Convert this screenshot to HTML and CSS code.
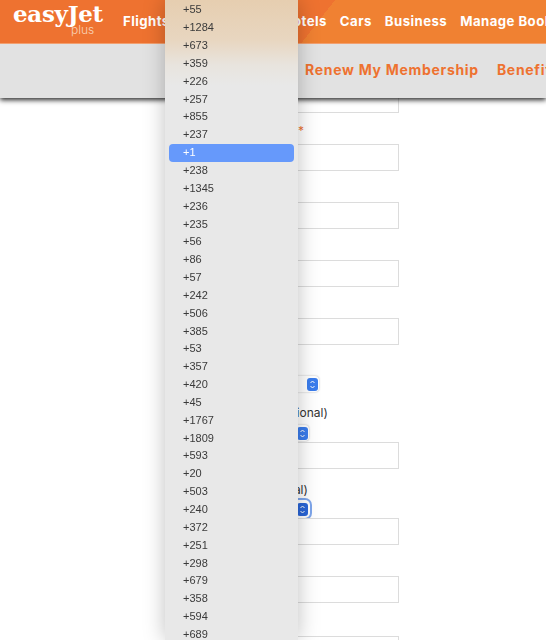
FILE: index.html
```html
<!DOCTYPE html>
<html lang="en">
<head>
  <meta charset="UTF-8">
  <meta name="viewport" content="width=device-width, initial-scale=1.0">
  <title>easyJet plus</title>
  <link rel="stylesheet" href="styles.css">
</head>
<body>
<div class="top-bar">
  <header class="main-header">
    <div class="logo">
      <span class="logo-name">easyJet</span>
      <span class="logo-plus">plus</span>
    </div>
    <nav class="main-nav">
      <a>Flights</a>
      <a class="nav-hotels">Hotels</a>
      <a>Cars</a>
      <a>Business</a>
      <a>Manage Bookings</a>
    </nav>
  </header>
  <nav class="sub-nav">
    <a>Renew My Membership</a>
    <a>Benefits</a>
  </nav>
</div>

<form class="form">
  <div class="field"><label></label><div class="input"></div></div>
  <div class="field"><label class="label-star"><span class="req">*</span></label><div class="input"></div></div>
  <div class="field"><label></label><div class="input"></div></div>
  <div class="field"><label></label><div class="input"></div></div>
  <div class="field"><label></label><div class="input"></div></div>
  <div class="field field-select">
    <label></label>
    <div class="select select-wide"><span class="stepper"><svg viewBox="0 0 11 13"><path d="M3.5 5 5.5 3 7.5 5M3.5 8 5.5 10 7.5 8"/></svg></span></div>
  </div>
  <div class="field field-select field-phone">
    <label>Alternative Phone (optional)</label>
    <div class="select"><span class="stepper"><svg viewBox="0 0 11 13"><path d="M3.5 5 5.5 3 7.5 5M3.5 8 5.5 10 7.5 8"/></svg></span></div>
    <div class="input"></div>
  </div>
  <div class="field field-select field-phone field-focus">
    <label>Mobile Phone (optional)</label>
    <div class="select select-focus"><span class="stepper"><svg viewBox="0 0 11 13"><path d="M3.5 5 5.5 3 7.5 5M3.5 8 5.5 10 7.5 8"/></svg></span></div>
    <div class="input"></div>
  </div>
  <div class="field field-gap"><label></label><div class="input"></div></div>
  <div class="field"><label></label><div class="input"></div></div>
</form>

<ul class="dropdown">
  <li>+55</li>
  <li>+1284</li>
  <li>+673</li>
  <li>+359</li>
  <li>+226</li>
  <li>+257</li>
  <li>+855</li>
  <li>+237</li>
  <li class="selected">+1</li>
  <li>+238</li>
  <li>+1345</li>
  <li>+236</li>
  <li>+235</li>
  <li>+56</li>
  <li>+86</li>
  <li>+57</li>
  <li>+242</li>
  <li>+506</li>
  <li>+385</li>
  <li>+53</li>
  <li>+357</li>
  <li>+420</li>
  <li>+45</li>
  <li>+1767</li>
  <li>+1809</li>
  <li>+593</li>
  <li>+20</li>
  <li>+503</li>
  <li>+240</li>
  <li>+372</li>
  <li>+251</li>
  <li>+298</li>
  <li>+679</li>
  <li>+358</li>
  <li>+594</li>
  <li>+689</li>
</ul>
</body>
</html>
```

FILE: styles.css
```css
html, body {
  height: 640px;
  overflow: hidden;
}

body {
  margin: 0;
  background-color: #fff;
  color: #333;
  font-family: Inter, "Liberation Sans", sans-serif;
}

.top-bar {
  position: fixed;
  top: 0;
  left: 0;
  right: 0;
  z-index: 2;
  box-shadow: 0 2px 5px rgba(0,0,0,0.85);
}

.main-header {
  display: flex;
  height: 43px;
  padding-left: 13px;
  background: linear-gradient(128deg, #ee7230 264px, #f08132 264px);
  border-bottom: 1px solid #f2a070;
  overflow: hidden;
}

.logo {
  display: flex;
  flex-direction: column;
  width: 110px;
  flex-shrink: 0;
  color: #fff;
}

.logo-name {
  margin-top: 1px;
  font-family: "DejaVu Serif", serif;
  font-size: 23px;
  font-weight: 700;
  line-height: 25px;
  letter-spacing: -0.3px;
}

.logo-plus {
  margin-top: -3px;
  margin-left: 58px;
  font-size: 12px;
  font-weight: 300;
  line-height: 13px;
  color: #f8d3b8;
}

.main-nav {
  display: flex;
  align-items: center;
  gap: 13px;
  padding-bottom: 2px;
  white-space: nowrap;
  color: #fff;
  font-size: 13.2px;
  font-weight: 700;
  letter-spacing: 0.45px;
}

.nav-hotels {
  margin-left: 100px;
}

.sub-nav {
  box-sizing: border-box;
  display: flex;
  align-items: center;
  gap: 18px;
  height: 54px;
  padding-left: 305px;
  padding-bottom: 4px;
  background-color: #e2e2e2;
  color: #ee7230;
  font-size: 14px;
  font-weight: 700;
  letter-spacing: 0.7px;
  white-space: nowrap;
  overflow: hidden;
}

.form {
  width: 229px;
  margin-left: 170px;
  padding-top: 65px;
}

.field {
  margin-bottom: 10px;
}

.field label {
  display: block;
  height: 16px;
  margin-bottom: 5px;
  font-size: 12px;
  line-height: 16px;
  white-space: nowrap;
}

.field .label-star {
  padding-left: 128px;
}

.req {
  color: #ee7230;
}

.input {
  box-sizing: border-box;
  height: 27px;
  background-color: #fff;
  border: 1px solid #dcdcdc;
}

.field-select {
  margin-bottom: 13px;
}

.field-gap {
  margin-bottom: 12px;
}

.field-phone label {
  margin-bottom: 4px;
}

.field-phone .select {
  margin-bottom: 1px;
}

.field-focus {
  margin-bottom: 10px;
}

.field-focus label {
  margin-bottom: 3px;
  padding-left: 3px;
}

.select {
  box-sizing: border-box;
  display: flex;
  justify-content: flex-end;
  align-items: center;
  width: 139px;
  height: 16px;
  padding-right: 1px;
  background-color: #fff;
  border-radius: 4px;
  box-shadow: 0 0 2px rgba(0,0,0,0.3);
}

.select-wide {
  width: 149px;
}

.select-focus {
  box-shadow: 0 0 0 1px #fff, 0 0 0 3px #7ea6ec;
}

.stepper {
  display: block;
  width: 11px;
  height: 13px;
  background-color: #3b7ded;
  border-radius: 3px;
}

.select-focus .stepper {
  background-color: #2a66d8;
}

.stepper svg {
  display: block;
  width: 11px;
  height: 13px;
  fill: none;
  stroke: #fff;
  stroke-width: 1;
}

.dropdown {
  position: absolute;
  top: 0;
  left: 165px;
  z-index: 3;
  box-sizing: border-box;
  width: 133px;
  height: 640px;
  margin: 0;
  padding: 1.4px 4px 0;
  overflow: hidden;
  list-style: none;
  background: linear-gradient(#e6ceb0 0, #e8d6c0 40px, #e8e4de 65px, #e8e8e8 85px);
  box-shadow: 0 0 20px rgba(0,0,0,0.25);
  font-family: "Liberation Sans", Arial, sans-serif;
  font-size: 11px;
  color: #3a3a3a;
}

.dropdown li {
  height: 17.85px;
  padding-left: 14px;
  line-height: 17.85px;
}

.dropdown .selected {
  background-color: #6699fb;
  border-radius: 4px;
  color: #fff;
}
```
